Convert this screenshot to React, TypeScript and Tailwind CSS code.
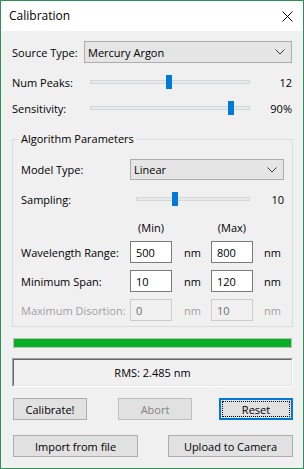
import React from "react";

const font = { fontFamily: '"Open Sans", "Noto Sans", sans-serif' };

function Chevron() {
  return (
    <svg width="10" height="6" viewBox="0 0 10 6" className="shrink-0">
      <path d="M0.5 0.5 L5 5 L9.5 0.5" fill="none" stroke="#3c3c3c" strokeWidth="1" />
    </svg>
  );
}

function Combo({ text, className }: { text: string; className: string }) {
  return (
    <div className={`flex items-center justify-between border border-[#adadad] bg-[#e5e5e5] pl-[3px] pr-[6px] ${className}`}>
      <span>{text}</span>
      <Chevron />
    </div>
  );
}

function Slider({ width, thumb }: { width: number; thumb: number }) {
  return (
    <div className="relative flex h-[20px] shrink-0 items-center" style={{ width }}>
      <div className="h-[4px] w-full border border-[#d6d6d6] bg-[#e7eaea]" />
      <div className="absolute top-[3px] h-[14px] w-[6px] bg-[#007ad9]" style={{ left: thumb }} />
    </div>
  );
}

function Input({ value, disabled }: { value: string; disabled?: boolean }) {
  return (
    <div
      className={`flex h-[22px] w-[42px] shrink-0 items-center border pl-[5px] ${
        disabled ? "border-[#cccccc] bg-[#f0f0f0] text-[#6d6d6d]" : "border-[#7a7a7a] bg-white text-black"
      }`}
    >
      {value}
    </div>
  );
}

function Btn({ children, className }: { children: React.ReactNode; className: string }) {
  return (
    <div className={`flex h-[22px] items-center justify-center border border-[#adadad] bg-[#e1e1e1] ${className}`}>
      {children}
    </div>
  );
}

export default function App() {
  return (
    <div
      className="flex h-[469px] w-[304px] flex-col whitespace-nowrap border border-[#2b9155] bg-[#f0f0f0] text-[11px] leading-none text-black"
      style={font}
    >
      <div className="flex h-[30px] shrink-0 items-center justify-between bg-white pl-[8px] pr-[10px]">
        <span className="text-[12px]">Calibration</span>
        <svg width="11" height="11" viewBox="0 0 11 11">
          <path d="M0.5 0.5 L10.5 10.5 M10.5 0.5 L0.5 10.5" stroke="#000" strokeWidth="1" />
        </svg>
      </div>

      <div className="flex flex-col px-[11px]">
        <div className="mt-[10px] flex h-[22px] items-center">
          <span className="w-[72px] shrink-0">Source Type:</span>
          <Combo text="Mercury Argon" className="h-[22px] flex-1" />
        </div>

        <div className="mt-[9px] flex h-[20px] items-center">
          <span className="w-[78px] shrink-0">Num Peaks:</span>
          <Slider width={160} thumb={76} />
          <span className="flex-1 text-right">12</span>
        </div>

        <div className="mt-[6px] flex h-[20px] items-center">
          <span className="w-[78px] shrink-0">Sensitivity:</span>
          <Slider width={160} thumb={138} />
          <span className="flex-1 text-right">90%</span>
        </div>

        <div className="relative mt-[21px] w-[281px] border border-[#dcdcdc] pl-[8px] pr-[8px] pb-[5px]">
          <span className="absolute left-[6px] top-[-7px] bg-[#f0f0f0] px-[2px]">Algorithm Parameters</span>

          <div className="mt-[19px] flex h-[21px] items-center">
            <span className="w-[109px] shrink-0">Model Type:</span>
            <Combo text="Linear" className="h-[21px] flex-1" />
          </div>

          <div className="mt-[9px] flex h-[20px] items-center">
            <span className="w-[115px] shrink-0">Sampling:</span>
            <Slider width={114} thumb={36} />
            <span className="flex-1 text-right">10</span>
          </div>

          <div className="mt-[10px] flex h-[16px] items-center">
            <span className="w-[109px] shrink-0" />
            <span className="w-[42px] text-center">(Min)</span>
            <span className="w-[39px]" />
            <span className="w-[42px] text-center">(Max)</span>
          </div>

          <div className="mt-[6px] flex h-[22px] items-center">
            <span className="w-[109px] shrink-0">Wavelength Range:</span>
            <Input value="500" />
            <span className="w-[39px] shrink-0 pl-[12px]">nm</span>
            <Input value="800" />
            <span className="pl-[11px]">nm</span>
          </div>

          <div className="mt-[7px] flex h-[22px] items-center">
            <span className="w-[109px] shrink-0">Minimum Span:</span>
            <Input value="10" />
            <span className="w-[39px] shrink-0 pl-[12px]">nm</span>
            <Input value="120" />
            <span className="pl-[11px]">nm</span>
          </div>

          <div className="mt-[7px] flex h-[22px] items-center text-[#a0a0a0]">
            <span className="w-[109px] shrink-0">Maximum Disortion:</span>
            <Input value="0" disabled />
            <span className="w-[39px] shrink-0 pl-[12px]">nm</span>
            <Input value="10" disabled />
            <span className="pl-[11px]">nm</span>
          </div>
        </div>

        <div className="ml-[1px] mt-[11px] h-[10px] w-[279px] border border-[#bcbcbc] bg-[#06b025]" />

        <div className="mt-[10px] h-[29px] w-[281px] border border-b-white border-l-[#a0a0a0] border-r-white border-t-[#a0a0a0]">
          <div className="flex h-full w-full items-center justify-center border border-b-[#e3e3e3] border-l-[#696969] border-r-[#e3e3e3] border-t-[#696969]">
            RMS: 2.485 nm
          </div>
        </div>

        <div className="ml-[1px] mt-[11px] flex w-[280px] items-center">
          <Btn className="w-[74px]">Calibrate!</Btn>
          <Btn className="ml-[31px] w-[74px] border-[#bfbfbf] bg-[#cccccc] text-[#838383]">Abort</Btn>
          <div className="relative ml-auto flex h-[22px] w-[74px] items-center justify-center border-2 border-[#0078d7] bg-[#e1e1e1]">
            <span className="absolute inset-[1px] border border-dotted border-black" />
            Reset
          </div>
        </div>

        <div className="ml-[1px] mt-[15px] flex w-[280px] items-center justify-between">
          <Btn className="w-[125px]">Import from file</Btn>
          <Btn className="w-[125px]">Upload to Camera</Btn>
        </div>
      </div>
    </div>
  );
}
